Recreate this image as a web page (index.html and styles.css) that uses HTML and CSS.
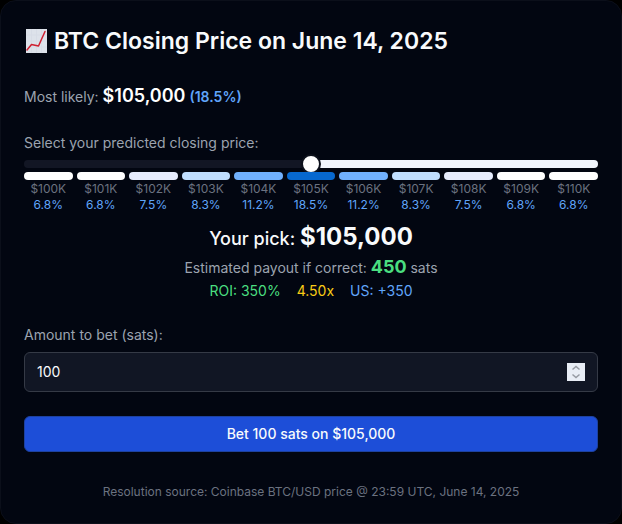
FILE: index.html
```html
<!DOCTYPE html>
<html lang="en">
<head>
	<meta charset="utf-8">
	<meta name="viewport" content="width=device-width, initial-scale=1">
	<title>BTC Closing Price</title>
	<link rel="stylesheet" href="styles.css">
</head>
<body>

<main class="card">
	<h1 class="title">
		<svg class="chart-icon" viewBox="0 0 24 24" aria-hidden="true">
			<rect x="2" width="21" height="24" fill="#dde2ea"/>
			<path d="M7.500 0v24M12.500 0v24M17.500 0v24M2 6h21M2 12h21M2 18h21" stroke="#d7dce6" stroke-width="1"/>
			<path d="M3 21L7.500 15.500L14.500 17L21 2.500" fill="none" stroke="#cf2031" stroke-width="1.500" stroke-linejoin="round" stroke-linecap="round"/>
		</svg>
		<span>BTC Closing Price on June 14, 2025</span>
	</h1>

	<p class="likely">Most likely: <strong class="likely-price">$105,000</strong> <span class="likely-chance">(18.5%)</span></p>

	<section class="picker">
		<label class="label" for="price">Select your predicted closing price:</label>
		<input class="slider" id="price" type="range" min="100" max="110" value="105">
		<ul class="odds">
			<li><i class="bar"></i><span>$100K</span><b>6.8%</b></li>
			<li><i class="bar"></i><span>$101K</span><b>6.8%</b></li>
			<li><i class="bar bar-1"></i><span>$102K</span><b>7.5%</b></li>
			<li><i class="bar bar-2"></i><span>$103K</span><b>8.3%</b></li>
			<li><i class="bar bar-3"></i><span>$104K</span><b>11.2%</b></li>
			<li><i class="bar bar-4"></i><span>$105K</span><b>18.5%</b></li>
			<li><i class="bar bar-3"></i><span>$106K</span><b>11.2%</b></li>
			<li><i class="bar bar-2"></i><span>$107K</span><b>8.3%</b></li>
			<li><i class="bar bar-1"></i><span>$108K</span><b>7.5%</b></li>
			<li><i class="bar"></i><span>$109K</span><b>6.8%</b></li>
			<li><i class="bar"></i><span>$110K</span><b>6.8%</b></li>
		</ul>
	</section>

	<section class="result">
		<p class="pick">Your pick: <strong class="pick-price">$105,000</strong></p>
		<p class="payout">Estimated payout if correct: <strong class="payout-sats">450</strong> sats</p>
		<p class="returns">
			<span class="green">ROI: 350%</span>
			<span class="yellow">4.50x</span>
			<span class="blue">US: +350</span>
		</p>
	</section>

	<form class="bet">
		<label class="label" for="amount">Amount to bet (sats):</label>
		<div class="field">
			<input class="amount" id="amount" type="number" min="1" value="100">
			<svg class="spinner" viewBox="0 0 18 18" aria-hidden="true">
				<rect width="18" height="18" fill="#e8edf5"/>
				<path d="M5.500 6.500L9 3.500L12.500 6.500M5.500 11.500L9 14.500L12.500 11.500" fill="none" stroke="#969ba3" stroke-width="1.500"/>
			</svg>
		</div>
		<button class="submit" type="button">Bet 100 sats on $105,000</button>
	</form>

	<p class="source">Resolution source: Coinbase BTC/USD price @ 23:59 UTC, June 14, 2025</p>
</main>

</body>
</html>
```

FILE: styles.css
```css
* {
	box-sizing: border-box;
}
body {
	margin: 0;
	background-color: #000;
	color: #f8fafc;
	font-family: Inter, "Liberation Sans", sans-serif;
	font-size: 14px;
	line-height: 20px;
}
h1, p, ul {
	margin: 0;
	padding: 0;
}

.card {
	padding: 23px;
	border: 1px solid #0b0f1a;
	border-radius: 16px;
	background-color: #020611;
}

.title {
	display: flex;
	align-items: center;
	gap: 6px;
	font-size: 23px;
	font-weight: 600;
	line-height: 34px;
}
.chart-icon {
	width: 24px;
	height: 24px;
}

.likely {
	margin-top: 24px;
	color: #9ca3af;
	line-height: 28px;
}
.likely-price {
	color: #fff;
	font-size: 18px;
	font-weight: 600;
}
.likely-chance {
	color: #60a5fa;
	font-weight: 600;
}

.label {
	color: #9ca3af;
}
.picker {
	display: flex;
	flex-direction: column;
	margin-top: 22px;
}

.slider {
	-webkit-appearance: none;
	appearance: none;
	width: 100%;
	height: 8px;
	margin: 7px 0 4px;
	border-radius: 4px;
	background: linear-gradient(to right, #121624 50%, #f1f5fd 50%);
}
.slider::-webkit-slider-thumb {
	-webkit-appearance: none;
	width: 20px;
	height: 20px;
	border: 2px solid #0d111c;
	border-radius: 50%;
	background-color: #fff;
}

.odds {
	display: flex;
	gap: 4px;
	list-style: none;
	font-size: 12px;
	line-height: 16px;
	text-align: center;
}
.odds li {
	display: flex;
	flex: 1 1 0;
	flex-direction: column;
	min-width: 0;
	color: #6b7280;
}
.odds b {
	color: #60a5fa;
	font-weight: 400;
}
.bar {
	height: 8px;
	margin-bottom: 1px;
	border-radius: 4px;
	background-color: #fff;
}
.bar-1 {
	background-color: #e6ecfd;
}
.bar-2 {
	background-color: #c0defe;
}
.bar-3 {
	background-color: #70b0fd;
}
.bar-4 {
	background-color: #0768cf;
}

.result {
	margin-top: 8px;
	text-align: center;
}
.pick {
	font-size: 18px;
	font-weight: 500;
	line-height: 32px;
}
.pick-price {
	font-size: 24px;
	font-weight: 700;
}
.payout {
	color: #9ca3af;
	line-height: 24px;
}
.payout-sats {
	color: #4ade80;
	font-size: 18px;
	font-weight: 700;
}
.returns {
	display: flex;
	justify-content: center;
	gap: 16px;
	margin-top: 1px;
}
.green {
	color: #4ade80;
}
.yellow {
	color: #facc15;
}
.blue {
	color: #60a5fa;
}

.bet {
	display: flex;
	flex-direction: column;
	margin-top: 24px;
}
.field {
	display: flex;
	align-items: center;
	height: 40px;
	margin-top: 7px;
	padding: 0 12px;
	border: 1px solid #353a46;
	border-radius: 6px;
	background-color: #111624;
}
.amount {
	-moz-appearance: textfield;
	appearance: textfield;
	flex: 1;
	min-width: 0;
	padding: 0;
	border: 0;
	outline: 0;
	background: none;
	color: #f8fafc;
	font: inherit;
}
.amount::-webkit-inner-spin-button {
	-webkit-appearance: none;
	margin: 0;
}
.spinner {
	width: 18px;
	height: 18px;
}

.submit {
	height: 36px;
	margin-top: 24px;
	padding: 0 16px;
	border: 1px solid #1e429f;
	border-radius: 6px;
	background-color: #1d4ed8;
	color: #f8fafc;
	font: inherit;
	font-weight: 500;
}

.source {
	margin-top: 32px;
	color: #6b7280;
	font-size: 12px;
	line-height: 16px;
	text-align: center;
}
```
